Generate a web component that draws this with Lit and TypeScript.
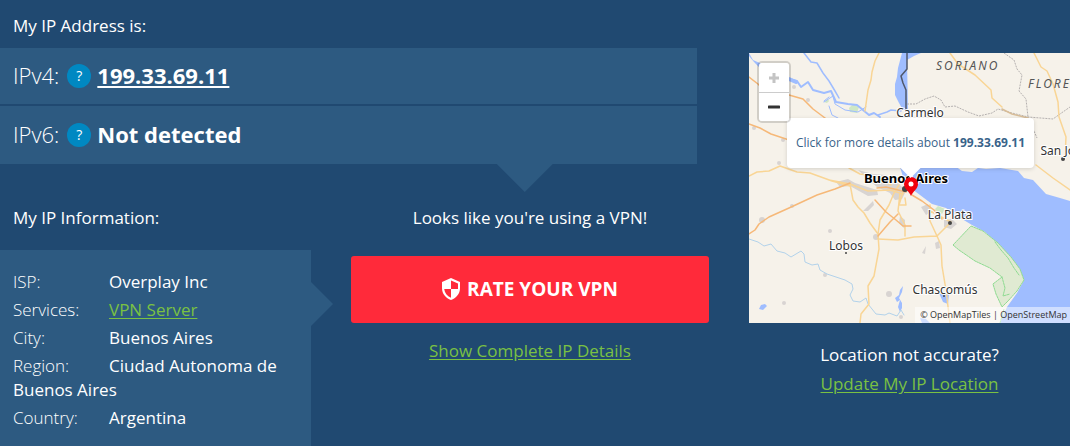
import { LitElement, html, css, svg } from "lit";
import { customElement } from "lit/decorators.js";

@customElement("location-map")
class LocationMap extends LitElement {
  static styles = css`
    :host {
      display: block;
      position: relative;
      height: 270px;
      overflow: hidden;
      background: #f6f2ea;
      font-family: "Open Sans", sans-serif;
    }
    .tiles {
      display: block;
      width: 100%;
      height: 100%;
    }
    .town {
      font: 12px "Noto Sans", sans-serif;
      fill: #333;
      stroke: #fff;
      stroke-width: 2px;
      paint-order: stroke;
      text-anchor: middle;
    }
    .capital {
      font-size: 13px;
      font-weight: 700;
      fill: #000;
    }
    .region {
      font: italic 12px "Noto Sans", sans-serif;
      letter-spacing: 2px;
      fill: #555;
    }
    .zoom {
      position: absolute;
      left: 8px;
      top: 8px;
      display: flex;
      flex-direction: column;
      border: 2px solid rgba(0, 0, 0, 0.15);
      border-radius: 5px;
      background-clip: padding-box;
    }
    .zoom button {
      display: grid;
      place-items: center;
      width: 30px;
      height: 28px;
      padding: 0;
      border: 0;
      background: #fff;
      color: #333;
      border-radius: 0 0 3px 3px;
    }
    .zoom .in {
      height: 30px;
      border-bottom: 1px solid #ccc;
      border-radius: 3px 3px 0 0;
      color: #c4c4c4;
    }
    .popup {
      position: absolute;
      left: 38px;
      top: 65px;
      box-sizing: border-box;
      padding: 16px 9px;
      border-radius: 4px;
      background: #fff;
      box-shadow: 0 1px 4px rgba(0, 0, 0, 0.15);
      font-size: 12px;
      line-height: 18px;
      white-space: nowrap;
      color: #39638a;
      text-decoration: none;
    }
    .popup::after {
      content: "";
      position: absolute;
      left: 50%;
      top: 100%;
      width: 20px;
      height: 10px;
      margin-left: -10px;
      background: #fff;
      clip-path: polygon(0 0, 100% 0, 50% 100%);
    }
    .credit {
      position: absolute;
      right: 0;
      bottom: 0;
      padding: 0 3px 0 5px;
      background: rgba(255, 255, 255, 0.5);
      font-size: 9px;
      line-height: 16px;
      white-space: nowrap;
      color: #333;
    }
    .credit a {
      color: inherit;
      text-decoration: none;
    }
  `;

  private tiles() {
    return svg`
      <g fill="none" stroke-linejoin="round" stroke-linecap="round">
        <path fill="#9fbdff" d="M898 160 L903 177 L912 189 L920 195 L932 204 L946 208 L957 216 L972 225 L985 232 L997 243 L1010 257 L1020 270 L1024 280 L1017 293 L1007 307 L1000 323 L1080 323 L1080 202 L1070 201 L1060 198 L1046 194 L1033 180 L1024 178 L1018 171 L1000 168 L986 169 L978 168 L972 172 L962 171 L955 166 L930 160 Z"/>
        <path fill="#9fbdff" d="M902 53 L898 68 L897 77 L895 84 L895 95 L899 103 L903 110 L908 110 L907 60 L914 56 L921 53 Z"/>
        <path fill="#9fbdff" d="M749 53 L753 60 L762 64 L759 67 L754 62 L749 56 Z"/>
        <path fill="#9fbdff" d="M759 309 L761 305 L765 304 L767 306 L763 310 Z M903 286 L900 290 L899 295 L895 298 L897 302 L900 300 L898 307 L900 312 L902 308 L902 303 L899 298 L902 292 Z M939 293 L949 294 L948 304 L943 302 Z M920 318 L926 319 L930 323 H922 Z"/>
        <path fill="#e0ead2" stroke="#8edb91" stroke-dasharray="2 1" d="M971 226 L983 231 L998 243 L1011 257 L1020 269 L1024 280 L1017 291 L1008 301 L1002 307 L996 294 L993 284 L1002 277 L990 268 L975 261 L959 250 L953 245 Z"/>
        <path stroke="#8edb91" stroke-dasharray="2 1" d="M995 242 L1001 250 L1008 258 L1014 268 L1019 275 M1002 277 L1005 288 L1003 296 L1010 294 M1000 323 L1004 309"/>
        <path fill="#cfe7c5" d="M935 209 L938 206 L945 209 L942 214 L936 211 Z M824 102 L828 99 L831 105 L829 101 L827 103 M849 108 L853 104 L859 107 L857 113 L850 112 Z"/>
        <path fill="#d8d4d2" d="M836 182 L848 179 L855 183 L877 190 L878 195 L868 196 L850 186 L840 187 Z M858 170 L873 174 L886 175 L898 183 L906 191 L902 199 L895 200 L890 193 L877 187 L870 181 Z M863 211 L873 201 L874 205 L868 211 Z M900 216 L905 220 L905 229 L899 223 Z M921 207 L928 204 L931 212 L926 215 Z M944 220 L952 219 L957 224 L951 229 L944 227 Z M922 253 L926 246 L925 254 Z M935 243 L939 241 L940 248 L936 249 Z"/>
        <g fill="#d8d4d2"><circle cx="794" cy="87" r="2"/><circle cx="808" cy="100" r="2"/><circle cx="762" cy="220" r="3"/><circle cx="830" cy="231" r="2"/><circle cx="825" cy="275" r="2"/><circle cx="784" cy="303" r="2"/><circle cx="889" cy="294" r="3"/><circle cx="876" cy="237" r="3"/><circle cx="754" cy="128" r="2"/><circle cx="783" cy="140" r="2"/><circle cx="779" cy="163" r="2"/><circle cx="792" cy="206" r="2"/><circle cx="901" cy="317" r="2"/></g>
        <path stroke="#9fbdff" stroke-width="2" d="M789 79 L797 81 L801 87 L808 82 L813 90 L824 93 L831 91 L836 102 L848 104 L857 105 L869 115 L874 113 L880 117"/>
        <path stroke="#9fbdff" stroke-width="1.5" d="M878 115 L887 112 L891 110 L901 111"/>
        <path stroke="#9fbdff" stroke-width="4" d="M789 79 L796 82"/>
        <path stroke="#9fbdff" stroke-width="1.5" d="M804 53 L811 62 L817 63 L823 73 L829 81 L835 91 L839 98"/>
        <path stroke="#9fbdff" d="M824 102 L833 96 L835 104 L845 110 L858 112 L866 107 M829 106 L832 115 L838 118 M824 101 L829 97"/>
        <path stroke="#b2d2eb" d="M749 239 L758 242 L764 246 L771 244 L777 251 L785 253 L791 257 L801 251 L804 254 L805 262 L812 265 L818 264 L820 270 L827 274 L836 277 L845 280 L852 284 L853 289 L850 295 L853 301 L860 302 L866 298 L868 304 L876 314 L885 315 L889 313 L897 316 L901 310 L904 315"/>
        <path stroke="#b5b1b0" stroke-dasharray="2 1" stroke-linecap="butt" d="M907 104 L916 104 L925 99 L934 96 L941 100 L945 107 L955 106 L968 112 L979 116 L992 113 L998 109 L1012 113 L1028 117 L1053 119 L1060 114 L1070 107 M1004 53 L1014 60 L1017 69 L1022 75 L1019 91 L1026 99 L1028 117 L1037 138"/>
        <g stroke="#f9d595" stroke-width="1.5">
          <path d="M950 53 L958 64 L975 75 L991 90 L992 98 L1002 107 M1034 53 L1041 67 L1047 71 L1053 84 L1058 102 L1059 117 L1066 137 L1065 157 M1036 165 L1053 178 L1070 190"/>
          <path d="M879 53 L875 61 L872 72 L871 80 L868 90 L865 111"/>
          <path d="M749 176 L757 172 L769 171 L780 166 L797 172 L810 173 L832 181 L850 186 M849 168 L860 174 L874 176 L891 185 M829 180 L850 184 L868 191 L890 190 L903 194"/>
          <path d="M850 184 L853 200 L858 207 L864 213 L870 223 L878 234 L879 249 L874 276 L868 286 L869 304 L861 314 L860 323"/>
          <path d="M878 239 L898 240 L914 237 L937 236 L941 245 L942 266 L946 290 L949 315 L950 323 M937 236 L951 222 L930 211 M937 236 L930 221 L930 205 M878 234 L880 220 L889 205 L894 193 L899 185 M900 193 L898 211 L905 225 L905 236 M903 192 L899 205 L906 205 L905 198"/>
        </g>
        <g stroke="#f6b878" stroke-width="1.5">
          <path d="M749 77 L758 84 L766 92 M789 95 L803 99 L813 109 L829 121 M749 124 L760 128 L771 134 L789 140 M749 234 L755 230 L759 224 L769 217 L789 208 L817 195 L835 189 L850 183"/>
          <path d="M875 200 L886 212 L896 220 L903 226 L911 226 M878 236 L890 222 L898 214 M912 195 L922 201 L934 210 L942 219 M877 188 L886 187 L906 192"/>
          <path stroke="#d8bd98" d="M1002 109 L1012 114 L1028 118"/>
        </g>
        <path stroke="#50586b" stroke-width="1.5" d="M907 53 V69 L901 76 L903 83 L906 90 V110"/>
        <g fill="#444"><circle cx="905" cy="189" r="3"/><circle cx="950" cy="223" r="2"/><circle cx="846" cy="253" r="1"/><circle cx="1063" cy="159" r="2"/><circle cx="944" cy="296" r="1"/></g>
      </g>
      <text class="region" x="936" y="70">SORIANO</text>
      <text class="region" x="1028" y="88">FLORES</text>
      <text class="town" x="920" y="117">Carmelo</text>
      <text class="town" x="1064" y="155">San José</text>
      <text class="town" x="950" y="219">La Plata</text>
      <text class="town" x="846" y="250">Lobos</text>
      <text class="town" x="945" y="294">Chascomús</text>
      <text class="town capital" x="906" y="183">Buenos Aires</text>
      <path fill="#f0000c" d="M911 196 C909 191 904 189 904 184 A7 7 0 0 1 918 184 C918 189 913 191 911 196 Z"/>
      <circle cx="911" cy="184" r="2.5" fill="#fff"/>
    `;
  }

  render() {
    return html`
      <svg class="tiles" viewBox="749 53 321 270" preserveAspectRatio="xMinYMid slice" role="img" aria-label="Map of Buenos Aires">
        ${this.tiles()}
      </svg>
      <a class="popup" href="#details">Click for more details about <b>199.33.69.11</b></a>
      <div class="zoom">
        <button class="in" aria-label="Zoom in" disabled>
          <svg width="12" height="12" viewBox="0 0 12 12"><path d="M6 1V11M1 6H11" stroke="currentColor" stroke-width="3" /></svg>
        </button>
        <button aria-label="Zoom out">
          <svg width="12" height="12" viewBox="0 0 12 12"><path d="M1 6H11" stroke="currentColor" stroke-width="3" stroke-linecap="round" /></svg>
        </button>
      </div>
      <div class="credit"><a href="#tiles">© OpenMapTiles</a> | <a href="#osm">OpenStreetMap</a></div>
    `;
  }
}

@customElement("app-root")
class AppRoot extends LitElement {
  static styles = css`
    :host {
      display: block;
      box-sizing: border-box;
      height: 100vh;
      overflow: hidden;
      background: #204971;
      color: #fff;
      font: 17px/24px "Open Sans", sans-serif;
    }
    .page {
      display: grid;
      grid-template-columns: minmax(0, 709fr) minmax(0, 321fr);
      gap: 40px;
      height: 100%;
    }
    .main {
      display: flex;
      flex-direction: column;
    }
    h2,
    p,
    dl,
    dd {
      margin: 0;
      font: inherit;
    }
    a {
      color: #7ac143;
      text-decoration: underline;
      text-underline-offset: 2px;
    }
    .title {
      padding: 14px 13px 10px;
    }
    .addresses {
      position: relative;
      display: flex;
      flex-direction: column;
      gap: 2px;
      margin-right: 12px;
    }
    .addresses::after {
      content: "";
      position: absolute;
      left: 75%;
      top: 100%;
      width: 56px;
      height: 28px;
      margin-left: -26px;
      background: #2d5a81;
      clip-path: polygon(0 0, 100% 0, 50% 100%);
    }
    .address {
      display: flex;
      align-items: center;
      gap: 6px;
      height: 56px;
      padding: 0 13px;
      background: #2d5a81;
      font-size: 22px;
    }
    .address + .address {
      height: 58px;
    }
    .address span,
    .address strong {
      padding-bottom: 2px;
    }
    .address strong a {
      color: #fff;
    }
    .label {
      padding-right: 2px;
      font-weight: 300;
    }
    .help {
      width: 24px;
      height: 24px;
      padding: 0;
      border: 0;
      border-radius: 50%;
      background: #0088c2;
      color: #fff;
      font: 14px/24px "Open Sans", sans-serif;
    }
    .lower {
      flex: 1;
      display: grid;
      grid-template-columns: minmax(0, 311fr) minmax(0, 358fr);
      gap: 40px;
      padding-top: 42px;
    }
    .info {
      display: flex;
      flex-direction: column;
    }
    .info h2 {
      padding: 0 13px 20px;
    }
    .panel {
      position: relative;
      flex: 1;
      padding: 20px 13px;
      background: #2d5a81;
    }
    .panel::after {
      content: "";
      position: absolute;
      left: 100%;
      top: 32px;
      width: 22px;
      height: 44px;
      background: #2d5a81;
      clip-path: polygon(0 0, 100% 50%, 0 100%);
    }
    .fact {
      margin-bottom: 4px;
    }
    .fact dt {
      display: inline-block;
      width: 96px;
      font-weight: 300;
    }
    .fact dd {
      display: inline;
    }
    .vpn {
      text-align: center;
    }
    .rate {
      display: flex;
      align-items: center;
      justify-content: center;
      gap: 7px;
      width: 100%;
      height: 67px;
      margin: 26px 0 16px;
      padding: 0 0 2px;
      border: 0;
      border-radius: 3px;
      background: #ff2a3a;
      color: #fff;
      font: 700 19px/24px "Open Sans", sans-serif;
    }
    .side {
      padding-top: 53px;
      text-align: center;
    }
    .side p {
      margin-bottom: 5px;
    }
    .side location-map {
      margin-bottom: 20px;
      text-align: left;
    }
  `;

  private facts = [
    ["ISP:", "Overplay Inc"],
    ["Services:", html`<a href="#vpn">VPN Server</a>`],
    ["City:", "Buenos Aires"],
    ["Region:", "Ciudad Autonoma de Buenos Aires"],
    ["Country:", "Argentina"],
  ];

  render() {
    return html`
      <div class="page">
        <section class="main">
          <h2 class="title">My IP Address is:</h2>
          <div class="addresses">
            <div class="address">
              <span class="label">IPv4:</span>
              <button class="help" aria-label="About IPv4">?</button>
              <strong><a href="#ip">199.33.69.11</a></strong>
            </div>
            <div class="address">
              <span class="label">IPv6:</span>
              <button class="help" aria-label="About IPv6">?</button>
              <strong>Not detected</strong>
            </div>
          </div>
          <div class="lower">
            <div class="info">
              <h2>My IP Information:</h2>
              <dl class="panel">
                ${this.facts.map(([name, value]) => html`<div class="fact"><dt>${name}</dt><dd>${value}</dd></div>`)}
              </dl>
            </div>
            <div class="vpn">
              <p>Looks like you're using a VPN!</p>
              <button class="rate">
                <svg width="18" height="22" viewBox="0 0 18 22" aria-hidden="true">
                  <path fill="#fff" fill-rule="evenodd" d="M9 0 L18 4 V10 C18 16 14 20 9 22 C4 20 0 16 0 10 V4 Z M9 2.4 V11 H16 V5.4 Z M9 11 H2.2 C2.7 15 5 18 9 19.7 Z" />
                </svg>
                RATE YOUR VPN
              </button>
              <a href="#show">Show Complete IP Details</a>
            </div>
          </div>
        </section>
        <aside class="side">
          <location-map></location-map>
          <p>Location not accurate?</p>
          <a href="#update">Update My IP Location</a>
        </aside>
      </div>
    `;
  }
}
